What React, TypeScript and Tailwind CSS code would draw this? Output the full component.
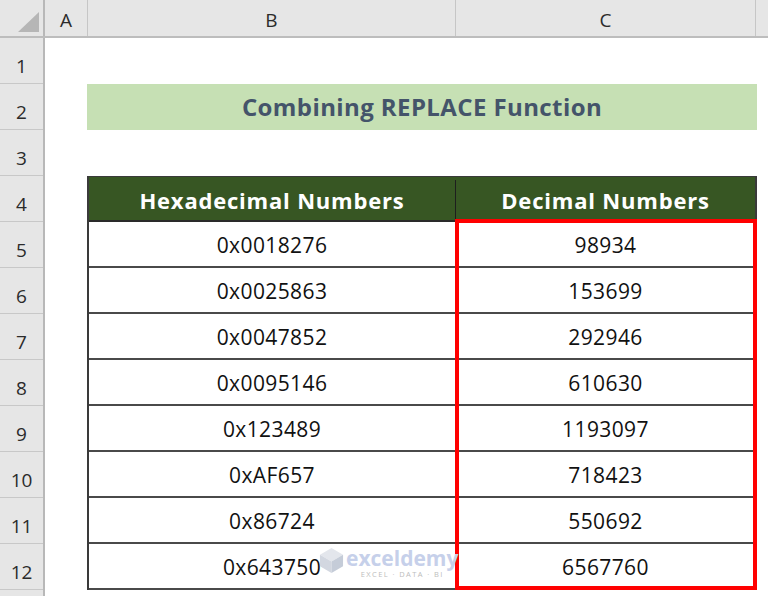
import React from "react";

const font = { fontFamily: '"Open Sans", "Liberation Sans", sans-serif' };

const rows: [string, string][] = [
  ["0x0018276", "98934"],
  ["0x0025863", "153699"],
  ["0x0047852", "292946"],
  ["0x0095146", "610630"],
  ["0x123489", "1193097"],
  ["0xAF657", "718423"],
  ["0x86724", "550692"],
  ["0x643750", "6567760"],
];

function Watermark() {
  return (
    <div className="absolute left-[319px] top-[547px] flex items-start gap-[2px] pointer-events-none">
      <svg width="25" height="27" viewBox="0 0 26 28" className="mt-[0px]">
        <polygon points="13,1 25,8 13,15 1,8" fill="#e3e6ec" />
        <polygon points="1,8 13,15 13,27 1,20" fill="#d2d7e0" />
        <polygon points="25,8 13,15 13,27 25,20" fill="#c5ccd8" />
      </svg>
      <div className="flex flex-col items-center leading-none">
        <span className="text-[21px] font-bold text-[#c6d0ea] leading-[22px]">exceldemy</span>
        <span className="text-[7.5px] text-[#bdbdbd] tracking-[1.4px] mt-[2px]">EXCEL · DATA · BI</span>
      </div>
    </div>
  );
}

export default function App() {
  return (
    <div className="relative w-[768px] h-[596px] overflow-hidden bg-white" style={font}>
      {/* column headers */}
      <div className="flex h-[38px] bg-[#e6e6e6] border-b-2 border-[#bdbdbd] text-[19px] text-[#2b2b2b]">
        <div className="w-[45px] border-r-2 border-[#b8b8b8] relative">
          <svg width="45" height="36" className="absolute left-0 top-0">
            <polygon points="39,12 39,32 18,32" fill="#b6b6b6" />
          </svg>
        </div>
        <div className="w-[43px] border-r border-[#c6c6c6] flex items-center justify-center pt-[4px]">A</div>
        <div className="w-[368px] border-r border-[#c6c6c6] flex items-center justify-center pt-[4px]">B</div>
        <div className="w-[300px] border-r border-[#c6c6c6] flex items-center justify-center pt-[4px]">C</div>
        <div className="flex-1" />
      </div>

      <div className="flex">
        {/* row headers */}
        <div className="w-[45px] bg-[#e6e6e6] border-r-2 border-[#b8b8b8] text-[19px] text-[#2b2b2b] shrink-0">
          {Array.from({ length: 13 }, (_, i) => (
            <div key={i} className="h-[46px] border-b border-[#c8c8c8] flex items-center justify-center pt-[12px]">
              {i < 12 ? i + 1 : ""}
            </div>
          ))}
        </div>

        {/* column A */}
        <div className="w-[42px] shrink-0" />

        {/* B and C */}
        <div className="w-[670px] shrink-0 flex flex-col">
          <div className="h-[46px]" />
          <div className="h-[46px] bg-[#c6e0b4] flex items-center justify-center text-[24px] font-bold text-[#44546a] tracking-[0.4px]">
            Combining REPLACE Function
          </div>
          <div className="h-[46px]" />

          <div className="border-l-2 border-r-2 border-[#3a3a3a]">
            <div className="flex h-[46px] bg-[#375623] text-white font-bold text-[22px] tracking-[0.8px] border-t border-[#3a3a3a] border-b-2 border-b-[#2a2a2a] pt-[3px]">
              <div className="w-[367px] border-r border-[#1e1e1e] flex items-center justify-center">Hexadecimal Numbers</div>
              <div className="flex-1 flex items-center justify-center">Decimal Numbers</div>
            </div>
            {rows.map(([hex, dec]) => (
              <div key={hex} className="flex h-[46px] border-b-2 border-[#4a4a4a] text-[21px] tracking-[0.4px] text-[#111]">
                <div className="w-[367px] border-r border-[#4a4a4a] flex items-center justify-center pt-[3px]">{hex}</div>
                <div className="flex-1 flex items-center justify-center pt-[3px]">{dec}</div>
              </div>
            ))}
          </div>
        </div>
      </div>

      {/* highlight box */}
      <div className="absolute left-[455px] top-[219px] w-[302px] h-[371px] border-[4px] border-[#ff0000] pointer-events-none" />

      <Watermark />
    </div>
  );
}
